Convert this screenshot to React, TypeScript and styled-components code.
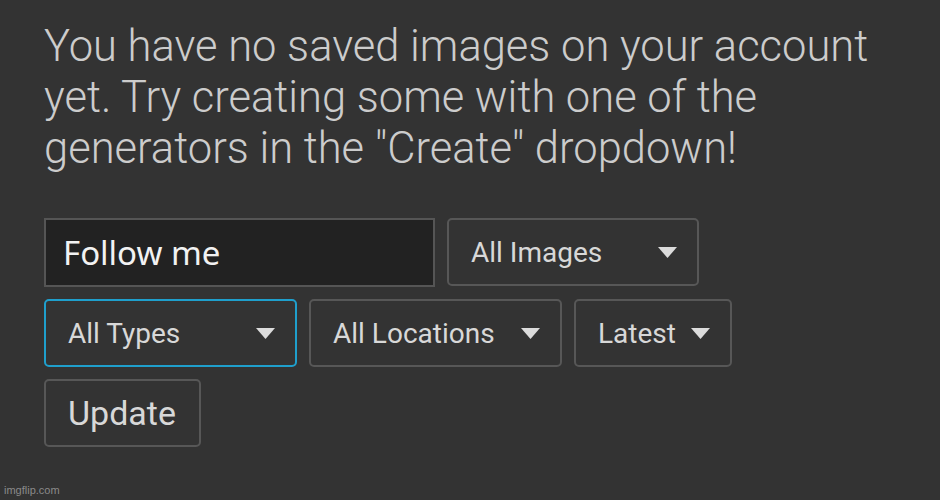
import React from "react";
import styled, { createGlobalStyle } from "styled-components";

const Global = createGlobalStyle`
  html, body { margin: 0; padding: 0; background: #333333; }
  body { width: 940px; height: 500px; overflow: hidden; }
`;

const Page = styled.div`
  position: relative;
  width: 940px;
  height: 500px;
  box-sizing: border-box;
  padding: 21px 0 0 44px;
  background: #333333;
  font-family: Roboto, "Liberation Sans", sans-serif;
`;

const Message = styled.p`
  margin: 0;
  width: 880px;
  font-family: Roboto, sans-serif;
  font-weight: 300;
  font-size: 43.5px;
  line-height: 51px;
  color: #cccccc;
`;

const Controls = styled.div`
  margin-top: 44px;
  display: flex;
  flex-wrap: wrap;
  column-gap: 12px;
  row-gap: 12px;
  width: 700px;
`;

const Input = styled.div`
  box-sizing: border-box;
  width: 391px;
  height: 69px;
  background: #222222;
  border: 2px solid #555555;
  display: flex;
  align-items: center;
  padding-left: 17px;
  font-family: "Noto Sans", sans-serif;
  font-size: 33px;
  color: #f2f2f2;
`;

const Select = styled.div<{ $w: number; $focus?: boolean }>`
  box-sizing: border-box;
  width: ${(p) => p.$w}px;
  height: 68px;
  border: 2px solid ${(p) => (p.$focus ? "#1f9fcc" : "#575757")};
  border-radius: 5px;
  display: flex;
  align-items: center;
  justify-content: space-between;
  padding: 0 20px 0 22px;
  font-size: 28px;
  color: #d8d8d8;
`;

const Button = styled.div`
  box-sizing: border-box;
  width: 157px;
  height: 68px;
  border: 2px solid #575757;
  border-radius: 5px;
  display: flex;
  align-items: center;
  padding-left: 22px;
  font-size: 34px;
  color: #d8d8d8;
`;

const Arrow = () => (
  <svg width="19" height="11" viewBox="0 0 19 11">
    <polygon points="0,0 19,0 9.5,11" fill="#dcdcdc" />
  </svg>
);

const Watermark = styled.div`
  position: absolute;
  left: 4px;
  bottom: 4px;
  font-family: "Liberation Sans", sans-serif;
  font-size: 11px;
  color: #8a8a8a;
`;

export default function App() {
  return (
    <Page>
      <Global />
      <Message>
        You have no saved images on your account yet. Try creating some with one
        of the generators in the "Create" dropdown!
      </Message>
      <Controls>
        <Input>Follow me</Input>
        <Select $w={252}>
          All Images <Arrow />
        </Select>
        <Select $w={253} $focus>
          All Types <Arrow />
        </Select>
        <Select $w={253}>
          All Locations <Arrow />
        </Select>
        <Select $w={158}>
          Latest <Arrow />
        </Select>
        <Button>Update</Button>
      </Controls>
      <Watermark>imgflip.com</Watermark>
    </Page>
  );
}
